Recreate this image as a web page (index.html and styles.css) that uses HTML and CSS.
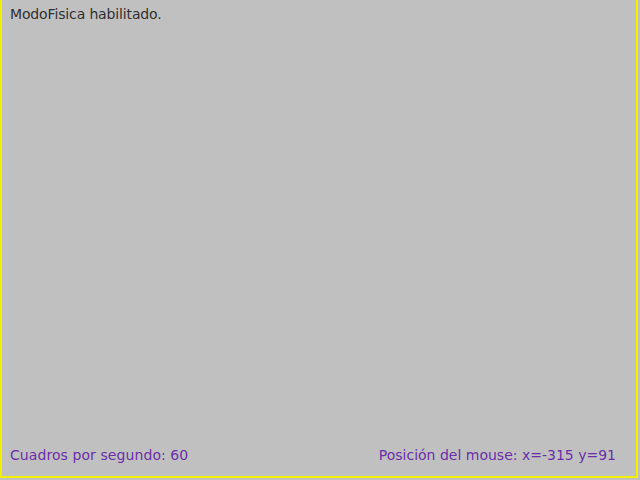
FILE: index.html
```
<!DOCTYPE html>
<html>
<head>
<meta charset="utf-8">
<link rel="stylesheet" href="styles.css">
</head>
<body>
<div class="screen">
  <div class="frame">
    <div class="status">ModoFisica habilitado.</div>
    <div class="footer">
      <span class="info fps">Cuadros por segundo: 60</span>
      <span class="info">Posición del mouse: x=-315 y=91</span>
    </div>
  </div>
</div>
</body>
</html>
```
FILE: styles.css
```
html, body {
  margin: 0;
  padding: 0;
  background: #c0c0c0;
}
.screen {
  width: 640px;
  height: 480px;
  background: #c0c0c0;
  overflow: hidden;
}
.frame {
  box-sizing: border-box;
  width: 638px;
  height: 478px;
  border-left: 2px solid #f0f000;
  border-right: 2px solid #f0f000;
  border-bottom: 2px solid #f0f000;
  display: flex;
  flex-direction: column;
  justify-content: space-between;
  padding: 6px 20px 12px 8px;
  font-family: "DejaVu Sans", sans-serif;
  font-size: 14px;
  line-height: 17px;
}
.status {
  color: #303030;
  letter-spacing: -0.14px;
}
.footer {
  display: flex;
  justify-content: space-between;
}
.info {
  color: #6a2fa8;
}
.fps {
  letter-spacing: 0.08px;
}
```
